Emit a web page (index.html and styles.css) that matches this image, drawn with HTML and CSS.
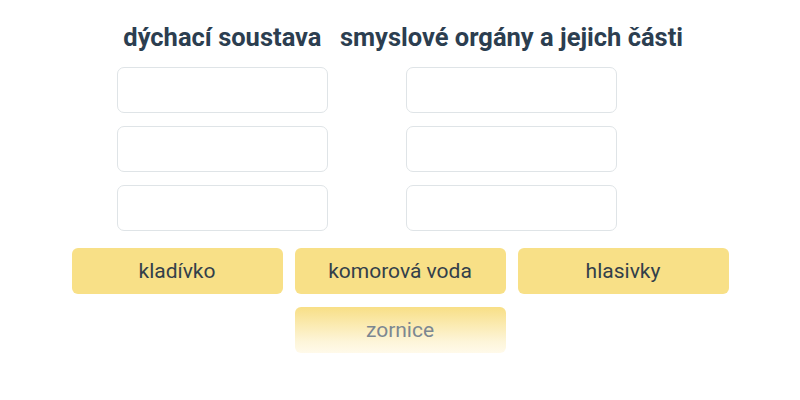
FILE: index.html
```html
<!DOCTYPE html>
<html>

<head>
	<title>Třídění pojmů</title>
	<meta charset="utf-8">
	<link rel="stylesheet" href="styles.css">
</head>

<body>
	<div class="ukol">
		<div class="skupiny">
			<div class="skupina">
				<h2>dýchací soustava</h2>
				<div class="pole"></div>
				<div class="pole"></div>
				<div class="pole"></div>
			</div>
			<div class="skupina">
				<h2>smyslové orgány a jejich části</h2>
				<div class="pole"></div>
				<div class="pole"></div>
				<div class="pole"></div>
			</div>
		</div>
		<div class="karticky">
			<div class="karta">kladívko</div>
			<div class="karta">komorová voda</div>
			<div class="karta">hlasivky</div>
			<div class="karta tazena">zornice</div>
		</div>
	</div>
</body>

</html>
```

FILE: styles.css
```css
* {
	margin: 0;
	box-sizing: border-box;
}

body {
	background-color: #fff;
	font-family: Roboto, "Liberation Sans", sans-serif;
	color: #2f3e4e;
}

.ukol {
	padding-top: 21px;
}

.skupiny {
	display: flex;
	justify-content: center;
	gap: 12px;
}

.skupina {
	display: flex;
	flex-direction: column;
	align-items: center;
	gap: 13px;
}

.skupina h2 {
	font-size: 25.5px;
	font-weight: 700;
	color: #2c3e50;
	line-height: 32px;
	margin-bottom: 1px;
}

.pole {
	width: 211px;
	height: 46px;
	border: 1px solid #dfe4e7;
	border-radius: 7px;
	background-color: #fff;
}

.karticky {
	display: flex;
	flex-wrap: wrap;
	justify-content: center;
	gap: 13px 12px;
	width: 660px;
	margin: 17px auto 0;
}

.karta {
	width: 211px;
	height: 46px;
	border-radius: 6px;
	background-color: #f8e087;
	display: flex;
	align-items: center;
	justify-content: center;
	font-size: 21px;
	color: #333f4a;
}

.tazena {
	background: linear-gradient(#f8df86, #fdf5d9 75%, #fffaea);
	color: #7c8791;
}
```
